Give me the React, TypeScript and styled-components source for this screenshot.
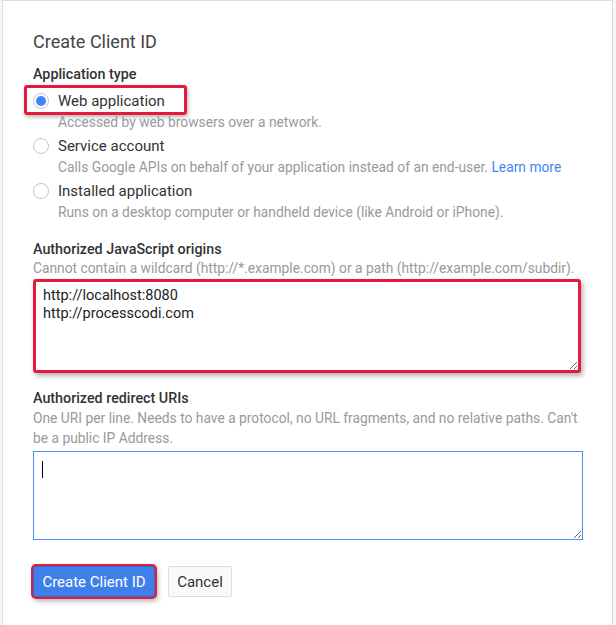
import React from "react"
import styled, { createGlobalStyle, css } from "styled-components"

const GlobalStyle = createGlobalStyle`
  html, body {
    margin: 0;
    padding: 0;
    background: #f7f7f7;
    font-family: Roboto, "Liberation Sans", Arial, sans-serif;
  }
`

const red = "#e8173c"

const Page = styled.div`
  padding-left: 2px;
  padding-right: 3px;
`

const Panel = styled.div`
  box-sizing: border-box;
  min-height: 625px;
  background: #fff;
  border: 1px solid #dcdcdc;
  border-bottom: none;
  padding: 29px 30px 0 30px;
`

const Title = styled.h1`
  margin: 0;
  font-size: 18px;
  line-height: 24px;
  font-weight: 400;
  color: #444;
`

const Label = styled.div<{ $top: number }>`
  margin-top: ${(p) => p.$top}px;
  font-size: 14.3px;
  line-height: 19px;
  font-weight: 500;
  color: #333;
`

const Hint = styled.div`
  font-size: 13.8px;
  line-height: 20px;
  color: #999;
`

const Options = styled.div`
  display: flex;
  flex-direction: column;
  gap: 3px;
  margin-top: 6px;
`

const Option = styled.div``

const Highlight = styled.div<{ $on?: boolean }>`
  display: flex;
  ${(p) =>
    p.$on &&
    css`
      display: inline-flex;
      border: 3px solid ${red};
      border-radius: 3px;
      padding: 2px 19px 0 6px;
      margin: -5px 0 -3px -9px;
      box-shadow: 1px 2px 4px rgba(0, 0, 0, 0.3);
    `}
`

const OptionRow = styled.label`
  display: flex;
  align-items: center;
  gap: 9px;
  font-size: 15px;
  line-height: 22px;
  color: #333;
`

const Radio = styled.span<{ $checked?: boolean }>`
  box-sizing: border-box;
  width: 16px;
  height: 16px;
  border-radius: 50%;
  border: 1px solid #c6c6c6;
  background: #fff;
  display: flex;
  align-items: center;
  justify-content: center;
  flex: none;

  &::after {
    content: "";
    width: 10px;
    height: 10px;
    border-radius: 50%;
    background: ${(p) => (p.$checked ? "#4285f4" : "transparent")};
  }
`

const OptionHint = styled(Hint)`
  padding-left: 25px;
`

const Link = styled.a`
  color: #4285f4;
  text-decoration: none;
`

const FieldHint = styled(Hint)`
  line-height: 19px;
`

const Area = styled.textarea<{ $flagged?: boolean }>`
  display: block;
  box-sizing: border-box;
  resize: both;
  font-family: Roboto, "Liberation Sans", Arial, sans-serif;
  font-size: 14.5px;
  line-height: 18px;
  color: #222;
  outline: none;
  ${(p) =>
    p.$flagged
      ? css`
          width: 548px;
          height: 94px;
          margin-top: 1px;
          border: 3px solid ${red};
          border-radius: 3px;
          padding: 5px 7px;
          box-shadow: 2px 3px 5px rgba(0, 0, 0, 0.3);
        `
      : css`
          width: 550px;
          height: 89px;
          margin-top: 3px;
          border: 1px solid #4d90fe;
          border-radius: 0;
          padding: 6px 8px;
        `}
`

const AreaWrap = styled.div`
  position: relative;
  width: 550px;
`

const Caret = styled.span`
  position: absolute;
  left: 9px;
  top: 10px;
  width: 1px;
  height: 17px;
  background: #000;
`

const Actions = styled.div`
  display: flex;
  align-items: center;
  gap: 13px;
  margin-top: 26px;
`

const Button = styled.button<{ $primary?: boolean; $flagged?: boolean }>`
  box-sizing: border-box;
  height: 31px;
  padding: 0 8px;
  font-family: Roboto, "Liberation Sans", Arial, sans-serif;
  font-size: 15px;
  border-radius: 2px;
  cursor: pointer;
  ${(p) =>
    p.$primary
      ? css`
          width: 122px;
          color: #fff;
          background: #3f7fe9;
          border: 1px solid #2f6bd6;
        `
      : css`
          width: 64px;
          color: #333;
          background: #fafafa;
          border: 1px solid #dcdcdc;
        `}
  ${(p) =>
    p.$flagged &&
    css`
      box-shadow: 0 0 0 2px ${red}, 2px 3px 5px 1px rgba(0, 0, 0, 0.3);
      border-radius: 3px;
    `}
`

type Choice = { label: string; hint: React.ReactNode; checked?: boolean }

const choices: Choice[] = [
  { label: "Web application", hint: "Accessed by web browsers over a network.", checked: true },
  {
    label: "Service account",
    hint: (
      <>
        Calls Google APIs on behalf of your application instead of an end-user.{" "}
        <Link href="#">Learn more</Link>
      </>
    ),
  },
  {
    label: "Installed application",
    hint: "Runs on a desktop computer or handheld device (like Android or iPhone).",
  },
]

export default function App() {
  return (
    <>
      <GlobalStyle />
      <Page>
        <Panel>
          <Title>Create Client ID</Title>

          <Label $top={11}>Application type</Label>
          <Options>
            {choices.map((c) => (
              <Option key={c.label}>
                <Highlight $on={c.checked}>
                  <OptionRow>
                    <Radio $checked={c.checked} />
                    {c.label}
                  </OptionRow>
                </Highlight>
                <OptionHint>{c.hint}</OptionHint>
              </Option>
            ))}
          </Options>

          <Label $top={18}>Authorized JavaScript origins</Label>
          <FieldHint>
            Cannot contain a wildcard (http://*.example.com) or a path (http://example.com/subdir).
          </FieldHint>
          <Area
            $flagged
            readOnly
            defaultValue={"http://localhost:8080\nhttp://processcodi.com"}
          />

          <Label $top={16}>Authorized redirect URIs</Label>
          <Hint>
            One URI per line. Needs to have a protocol, no URL fragments, and no relative paths. Can't
            be a public IP Address.
          </Hint>
          <AreaWrap>
            <Area readOnly />
            <Caret />
          </AreaWrap>

          <Actions>
            <Button $primary $flagged>
              Create Client ID
            </Button>
            <Button>Cancel</Button>
          </Actions>
        </Panel>
      </Page>
    </>
  )
}
